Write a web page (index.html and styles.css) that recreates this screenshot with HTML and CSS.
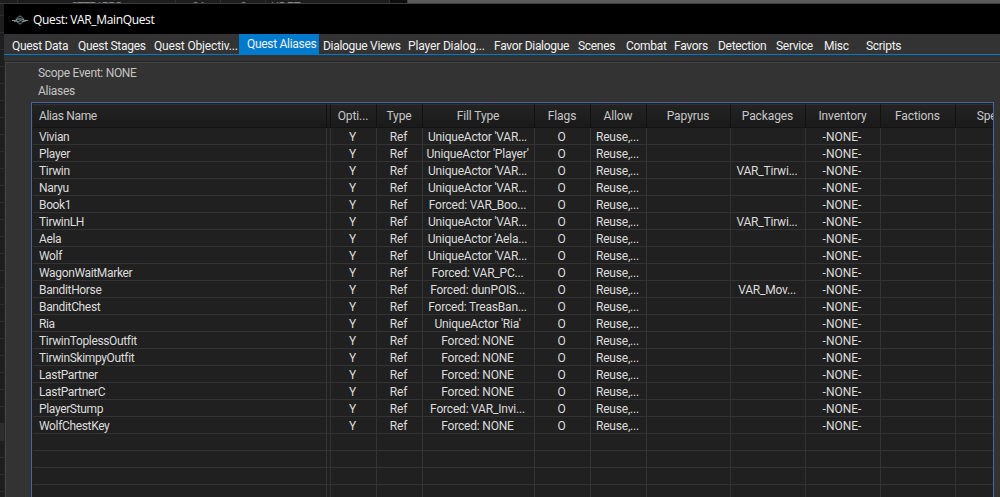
FILE: index.html
```html
<!DOCTYPE html>
<html lang="en">
<head>
    <meta charset="UTF-8">
    <title>Quest: VAR_MainQuest</title>
    <link rel="stylesheet" href="styles.css">
</head>
<body>
    <div class="backdrop">
        <div class="parent-header">
            <span class="parent-cell parent-form">STEP1PRG</span>
            <span class="parent-cell parent-count">04</span>
            <span class="parent-cell parent-users">0</span>
            <span class="parent-cell parent-type">UDFT</span>
            <span class="parent-scroll"></span>
            <span class="parent-panel"></span>
        </div>
        <div class="parent-selected"></div>
    </div>

    <div class="window">
        <header class="title-bar">
            <svg class="app-icon" width="17" height="12" viewBox="0 0 17 12">
                <circle cx="8" cy="6" r="3.600" fill="#10181b" stroke="#56646a"/>
                <path d="M0 6.500h3l2-1.500h5l3 1.500h3" stroke="#8d9a9e" fill="none"/>
                <path d="M2 7.500l3-.5 1.500 1 2-2 1.500 1.500 4-.5" stroke="#a3b3b8" stroke-width=".8" fill="none"/>
                <path d="M8 1v1.500M8 9.500v1.500" stroke="#56646a" fill="none"/>
            </svg>
            <span class="title">Quest: VAR_MainQuest</span>
        </header>

        <nav class="tabs">
            <a class="tab" style="width:66px">Quest Data</a>
            <a class="tab" style="width:76px">Quest Stages</a>
            <a class="tab clipped" style="width:87px">Quest Objectiv...</a>
            <a class="tab active" style="width:80px">Quest Aliases</a>
            <a class="tab after-active" style="width:87px">Dialogue Views</a>
            <a class="tab clipped" style="width:86px">Player Dialog...</a>
            <a class="tab" style="width:84px">Favor Dialogue</a>
            <a class="tab" style="width:48px">Scenes</a>
            <a class="tab" style="width:48px">Combat</a>
            <a class="tab" style="width:44px">Favors</a>
            <a class="tab" style="width:58px">Detection</a>
            <a class="tab" style="width:48px">Service</a>
            <a class="tab" style="width:42px">Misc</a>
            <a class="tab" style="width:60px">Scripts</a>
        </nav>

        <main class="page">
            <div class="label">Scope Event: NONE</div>
            <div class="label">Aliases</div>

            <div class="list">
                <table class="grid">
                    <colgroup>
                        <col style="width:294px"><col style="width:4px"><col style="width:46px"><col style="width:46px">
                        <col style="width:112px"><col style="width:56px"><col style="width:56px"><col style="width:84px">
                        <col style="width:75px"><col style="width:75px"><col style="width:75px"><col style="width:75px">
                    </colgroup>
                    <thead>
                        <tr><th>Alias Name</th><th></th><th>Opti...</th><th>Type</th><th>Fill Type</th><th>Flags</th><th>Allow</th><th>Papyrus</th><th>Packages</th><th>Inventory</th><th>Factions</th><th>Spells</th></tr>
                    </thead>
                    <tbody>
                        <tr><td>Vivian</td><td></td><td>Y</td><td>Ref</td><td>UniqueActor 'VAR...</td><td>O</td><td>Reuse,...</td><td></td><td></td><td>-NONE-</td><td></td><td></td></tr>
                        <tr><td>Player</td><td></td><td>Y</td><td>Ref</td><td>UniqueActor 'Player'</td><td>O</td><td>Reuse,...</td><td></td><td></td><td>-NONE-</td><td></td><td></td></tr>
                        <tr><td>Tirwin</td><td></td><td>Y</td><td>Ref</td><td>UniqueActor 'VAR...</td><td>O</td><td>Reuse,...</td><td></td><td>VAR_Tirwi...</td><td>-NONE-</td><td></td><td></td></tr>
                        <tr><td>Naryu</td><td></td><td>Y</td><td>Ref</td><td>UniqueActor 'VAR...</td><td>O</td><td>Reuse,...</td><td></td><td></td><td>-NONE-</td><td></td><td></td></tr>
                        <tr><td>Book1</td><td></td><td>Y</td><td>Ref</td><td>Forced: VAR_Boo...</td><td>O</td><td>Reuse,...</td><td></td><td></td><td>-NONE-</td><td></td><td></td></tr>
                        <tr><td>TirwinLH</td><td></td><td>Y</td><td>Ref</td><td>UniqueActor 'VAR...</td><td>O</td><td>Reuse,...</td><td></td><td>VAR_Tirwi...</td><td>-NONE-</td><td></td><td></td></tr>
                        <tr><td>Aela</td><td></td><td>Y</td><td>Ref</td><td>UniqueActor 'Aela...</td><td>O</td><td>Reuse,...</td><td></td><td></td><td>-NONE-</td><td></td><td></td></tr>
                        <tr><td>Wolf</td><td></td><td>Y</td><td>Ref</td><td>UniqueActor 'VAR...</td><td>O</td><td>Reuse,...</td><td></td><td></td><td>-NONE-</td><td></td><td></td></tr>
                        <tr><td>WagonWaitMarker</td><td></td><td>Y</td><td>Ref</td><td>Forced: VAR_PC...</td><td>O</td><td>Reuse,...</td><td></td><td></td><td>-NONE-</td><td></td><td></td></tr>
                        <tr><td>BanditHorse</td><td></td><td>Y</td><td>Ref</td><td>Forced: dunPOIS...</td><td>O</td><td>Reuse,...</td><td></td><td>VAR_Mov...</td><td>-NONE-</td><td></td><td></td></tr>
                        <tr><td>BanditChest</td><td></td><td>Y</td><td>Ref</td><td>Forced: TreasBan...</td><td>O</td><td>Reuse,...</td><td></td><td></td><td>-NONE-</td><td></td><td></td></tr>
                        <tr><td>Ria</td><td></td><td>Y</td><td>Ref</td><td>UniqueActor 'Ria'</td><td>O</td><td>Reuse,...</td><td></td><td></td><td>-NONE-</td><td></td><td></td></tr>
                        <tr><td>TirwinToplessOutfit</td><td></td><td>Y</td><td>Ref</td><td>Forced: NONE</td><td>O</td><td>Reuse,...</td><td></td><td></td><td>-NONE-</td><td></td><td></td></tr>
                        <tr><td>TirwinSkimpyOutfit</td><td></td><td>Y</td><td>Ref</td><td>Forced: NONE</td><td>O</td><td>Reuse,...</td><td></td><td></td><td>-NONE-</td><td></td><td></td></tr>
                        <tr><td>LastPartner</td><td></td><td>Y</td><td>Ref</td><td>Forced: NONE</td><td>O</td><td>Reuse,...</td><td></td><td></td><td>-NONE-</td><td></td><td></td></tr>
                        <tr><td>LastPartnerC</td><td></td><td>Y</td><td>Ref</td><td>Forced: NONE</td><td>O</td><td>Reuse,...</td><td></td><td></td><td>-NONE-</td><td></td><td></td></tr>
                        <tr><td>PlayerStump</td><td></td><td>Y</td><td>Ref</td><td>Forced: VAR_Invi...</td><td>O</td><td>Reuse,...</td><td></td><td></td><td>-NONE-</td><td></td><td></td></tr>
                        <tr><td>WolfChestKey</td><td></td><td>Y</td><td>Ref</td><td>Forced: NONE</td><td>O</td><td>Reuse,...</td><td></td><td></td><td>-NONE-</td><td></td><td></td></tr>
                        <tr><td></td><td></td><td></td><td></td><td></td><td></td><td></td><td></td><td></td><td></td><td></td><td></td></tr>
                        <tr><td></td><td></td><td></td><td></td><td></td><td></td><td></td><td></td><td></td><td></td><td></td><td></td></tr>
                        <tr><td></td><td></td><td></td><td></td><td></td><td></td><td></td><td></td><td></td><td></td><td></td><td></td></tr>
                        <tr><td></td><td></td><td></td><td></td><td></td><td></td><td></td><td></td><td></td><td></td><td></td><td></td></tr>
                    </tbody>
                </table>
            </div>
        </main>
    </div>
</body>
</html>
```
FILE: styles.css
```css
* {
    margin: 0;
    padding: 0;
    box-sizing: border-box;
}

body {
    width: 1000px;
    height: 497px;
    overflow: hidden;
    background: #1c1c1c;
    color: #dcdcdc;
    font-family: Roboto, "Liberation Sans", sans-serif;
    font-size: 12px;
    letter-spacing: -0.3px;
}

/* main editor window behind the dialog */
.backdrop {
    position: absolute;
    inset: 0;
    background: repeating-linear-gradient(to bottom, #1e1e1e 0 16px, #2e2e2e 16px 17px);
    background-position: 0 -1px;
}

.parent-header {
    display: flex;
    height: 4px;
    overflow: hidden;
    background: #1d1d1d;
    border-bottom: 1px solid #3c3c3c;
    color: #858585;
}

.parent-cell {
    flex: none;
    height: 16px;
    border-right: 1px solid #303030;
    text-align: center;
    line-height: 14px;
    letter-spacing: -1px;
}

.parent-form {
    width: 159px;
    margin-left: 17px;
    border-left: 1px solid #303030;
}

.parent-count {
    width: 45px;
}

.parent-users {
    width: 45px;
}

.parent-type {
    width: 124px;
    padding-left: 5px;
    text-align: left;
    letter-spacing: 0;
}

.parent-scroll {
    width: 17px;
    background: #0d0d0d;
}

.parent-panel {
    flex: 1;
    background: #5b5b5b;
    border-left: 1px solid #444;
}

.parent-selected {
    height: 17px;
    margin-top: 419px;
    background: #2d2d2d;
}

.window {
    position: absolute;
    top: 4px;
    left: 4px;
    width: 996px;
    height: 493px;
    background: #333;
    overflow: hidden;
}

.title-bar {
    display: flex;
    align-items: center;
    height: 30px;
    padding-left: 8px;
    background: #000;
}

.app-icon {
    margin: 2px 4px 0 0;
}

.title {
    font-family: "Open Sans", sans-serif;
    font-size: 12px;
    letter-spacing: -0.35px;
    color: #fff;
}

.tabs {
    display: flex;
    height: 21px;
    border-bottom: 1px solid #007acc;
    padding-left: 6px;
}

.tab {
    flex: none;
    padding-left: 2px;
    line-height: 24px;
    color: #f1f1f1;
    white-space: nowrap;
}

.tab.clipped {
    letter-spacing: -0.15px;
}

.tab.active {
    padding-left: 8px;
    line-height: 20px;
    background: #007acc;
}

.tab.after-active {
    padding-left: 4px;
}

.page {
    height: 436px;
    margin-top: 6px;
    padding: 2px 6px 0 27px;
    border-top: 1px solid #252525;
    border-left: 1px solid #252525;
    box-shadow: inset 1px 1px #454545;
}

.label {
    height: 18px;
    padding-left: 6px;
    line-height: 19px;
    color: #c4c4c4;
}

.list {
    height: 420px;
    margin: 2px 0 0 -1px;
    padding: 1px 1px 0;
    border: 1px solid #46689e;
    background: #202020;
    overflow: hidden;
}

.grid {
    width: 998px;
    table-layout: fixed;
    border-collapse: separate;
    border-spacing: 0;
}

.grid th,
.grid td {
    padding-right: 1px;
    text-align: center;
    white-space: nowrap;
    overflow: hidden;
}

.grid th {
    height: 24px;
    padding-bottom: 1px;
    border-top: 1px solid #303030;
    border-right: 1px solid #111;
    border-bottom: 1px solid #141414;
    background: linear-gradient(#232323, #1a1a1a);
    font-weight: 400;
    letter-spacing: -0.1px;
    color: #c8c8c8;
}

.grid td {
    height: 17px;
    padding: 2px 2px 0 0;
    border-right: 1px solid #333;
    border-bottom: 1px solid #333;
    line-height: 14px;
    letter-spacing: -0.2px;
}

.grid td:nth-child(10) {
    letter-spacing: 0;
}

.grid th:first-child,
.grid td:first-child {
    padding-left: 6px;
    text-align: left;
    letter-spacing: -0.35px;
}
```
